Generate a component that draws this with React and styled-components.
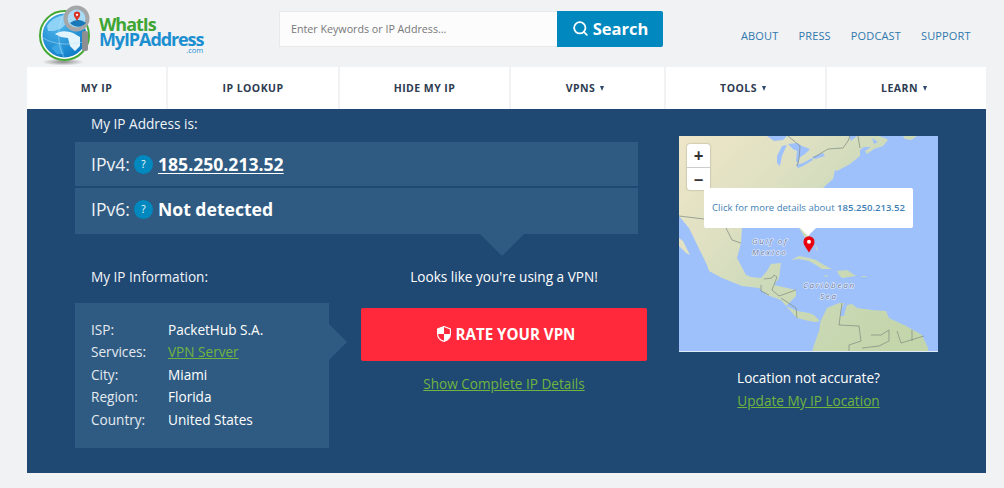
import React from 'react'
import styled, { createGlobalStyle } from 'styled-components'
import { Search } from 'lucide-react'

const GlobalStyle = createGlobalStyle`
    html, body {
        margin: 0;
        background-color: #f1f2f4;
        font-family: "Open Sans", "Liberation Sans", sans-serif;
    }
    * { box-sizing: border-box; }
`

const Page = styled.div`
    width: 959px;
    margin-left: 27px;
    padding-bottom: 15px;
`

const Header = styled.div`
    height: 67px;
    display: flex;
    align-items: flex-start;
`

const Logo = styled.a`
    display: flex;
    width: 242px;
    margin-left: 10px;
    margin-top: 4px;
`

const LogoText = styled.div`
    margin-left: 6px;
    margin-top: 13px;
    display: flex;
    flex-direction: column;
    font-weight: 700;
`

const LogoGreen = styled.span`
    color: #3fa535;
    font-size: 18px;
    line-height: 15px;
    letter-spacing: -1.05px;
`

const LogoBlue = styled.span`
    color: #1b8fd0;
    font-size: 18px;
    line-height: 14px;
    letter-spacing: -1.1px;
`

const LogoCom = styled.span`
    color: #1b8fd0;
    font-size: 7.5px;
    line-height: 8px;
    font-weight: 400;
    text-align: right;
`

const SearchBox = styled.div`
    display: flex;
    margin-top: 11px;
    height: 36px;
`

const SearchInput = styled.div`
    width: 278px;
    background-color: #fcfcfc;
    border: 1px solid #e8e9eb;
    border-right: none;
    padding-left: 11px;
    font-size: 10.7px;
    line-height: 34px;
    color: #77787a;
`

const SearchButton = styled.button`
    width: 106px;
    border: none;
    border-radius: 0 2px 2px 0;
    background-color: #0088bf;
    color: #fff;
    font-family: inherit;
    font-size: 16.5px;
    font-weight: 700;
    line-height: 36px;
    display: flex;
    align-items: flex-start;
    justify-content: center;
    gap: 4px;
    padding: 0;
    svg {
        margin-top: 9px;
    }
`

const TopLinks = styled.div`
    display: flex;
    gap: 20px;
    margin-left: 78px;
    margin-top: 29px;
`

const TopLink = styled.a`
    font-size: 11px;
    line-height: 14px;
    letter-spacing: 0.15px;
    color: #2f78ad;
`

const Nav = styled.div`
    height: 42px;
    display: flex;
    gap: 2px;
    background-color: #f1f2f4;
`

const NavItem = styled.a`
    width: ${props => props.$width}px;
    padding-right: ${props => props.$caret ? 5 : 0}px;
    background-color: #fff;
    display: flex;
    align-items: center;
    justify-content: center;
    gap: 5px;
    font-size: 10.5px;
    font-weight: 700;
    letter-spacing: 0.45px;
    color: #2e3b50;
`

const Caret = styled.span`
    width: 0;
    height: 0;
    border-left: 2.5px solid transparent;
    border-right: 2.5px solid transparent;
    border-top: 5px solid #2e4a6b;
`

const Main = styled.div`
    height: 364px;
    background-color: #1f4873;
    display: flex;
    color: #fff;
    padding-left: 48px;
    font-size: 13.6px;
`

const LeftColumn = styled.div`
    width: 572px;
`

const Heading = styled.div`
    padding-left: 16px;
    line-height: 19px;
    color: #f2f5f8;
`

const TopHeading = styled(Heading)`
    height: 33px;
    padding-top: 5px;
`

const IpRow = styled.div`
    position: relative;
    width: 563px;
    height: ${props => props.$height}px;
    margin-bottom: 2px;
    padding: 0 0 ${props => props.$lift}px 16px;
    background-color: #2f5b82;
    display: flex;
    align-items: center;
    font-size: 17.6px;
    color: #eef2f6;
    ${props => props.$pointer && `
        &::after {
            content: "";
            position: absolute;
            left: 405px;
            top: 100%;
            border-left: 22px solid transparent;
            border-right: 22px solid transparent;
            border-top: 22px solid #2f5b82;
        }
    `}
`

const HelpBadge = styled.span`
    width: 19px;
    height: 19px;
    border-radius: 50%;
    margin: 1px 5px 0 4px;
    background-color: #0088bf;
    color: #fff;
    font-size: 10px;
    font-weight: 400;
    line-height: 19px;
    text-align: center;
`

const IpValue = styled.a`
    font-weight: 700;
    color: #fff;
    text-decoration: ${props => props.$underline ? 'underline' : 'none'};
    text-underline-offset: 2px;
`

const LowerRow = styled.div`
    display: flex;
    gap: 32px;
    margin-top: 33px;
`

const InfoColumn = styled.div`
    width: 254px;
`

const InfoBox = styled.div`
    position: relative;
    height: 145px;
    margin-top: 17px;
    padding: 16px 0 0 16px;
    background-color: #2f5b82;
    display: grid;
    grid-template-columns: 77px 1fr;
    grid-auto-rows: 22.4px;
    align-content: start;
    line-height: 22px;
    &::after {
        content: "";
        position: absolute;
        left: 100%;
        top: 21px;
        border-top: 18px solid transparent;
        border-bottom: 18px solid transparent;
        border-left: 18px solid #2f5b82;
    }
`

const InfoLabel = styled.span`
    color: #e4eaf0;
`

const InfoValue = styled.span`
    color: #fff;
`

const GreenLink = styled.a`
    color: #6fb53f;
    text-decoration: underline;
    text-underline-offset: 1px;
`

const VpnColumn = styled.div`
    width: 286px;
    display: flex;
    flex-direction: column;
    align-items: center;
`

const VpnNote = styled.div`
    line-height: 19px;
    color: #fff;
`

const RateButton = styled.button`
    width: 100%;
    height: 53px;
    margin-top: 22px;
    padding: 0 0 1px 4px;
    border: none;
    border-radius: 2px;
    background-color: #ff293b;
    color: #fff;
    font-family: inherit;
    font-size: 15.1px;
    font-weight: 700;
    display: flex;
    align-items: center;
    justify-content: center;
    gap: 5px;
`

const DetailsLink = styled(GreenLink)`
    margin-top: 13px;
    line-height: 19px;
`

const MapColumn = styled.div`
    width: 259px;
    margin-left: 32px;
    padding-top: 27px;
    display: flex;
    flex-direction: column;
    align-items: center;
`

const MapBox = styled.div`
    position: relative;
    width: 259px;
    height: 216px;
    margin-bottom: 16px;
    overflow: hidden;
`

const MapImage = styled.svg`
    display: block;
`

const ZoomControl = styled.div`
    position: absolute;
    left: 8px;
    top: 8px;
    width: 23px;
    border-radius: 3px;
    box-shadow: 0 0 2px rgba(0, 0, 0, 0.35);
    background-color: #fff;
`

const ZoomButton = styled.div`
    height: 23px;
    display: flex;
    align-items: center;
    justify-content: center;
    color: #333;
    font-size: 17px;
    font-weight: 700;
    line-height: 1;
    & + & {
        border-top: 1px solid #ccc;
    }
`

const Popup = styled.div`
    position: absolute;
    left: 25px;
    top: 52px;
    width: 209px;
    height: 40px;
    background-color: #fff;
    border-radius: 2px;
    font-size: 9.55px;
    line-height: 39px;
    text-align: center;
    color: #3f7fb5;
    white-space: nowrap;
    &::after {
        content: "";
        position: absolute;
        left: 96px;
        top: 100%;
        border-left: 8px solid transparent;
        border-right: 8px solid transparent;
        border-top: 8px solid #fff;
    }
`

const PopupIp = styled.b`
    font-weight: 600;
`

const Pin = styled.svg`
    position: absolute;
    left: 124px;
    top: 100px;
`

const LocationNote = styled.div`
    line-height: 19px;
    color: #fff;
`

const LocationLink = styled(GreenLink)`
    margin-top: 4px;
    line-height: 19px;
`

const navItems = [
    { label: 'MY IP', width: 139 },
    { label: 'IP LOOKUP', width: 170 },
    { label: 'HIDE MY IP', width: 169 },
    { label: 'VPNS', width: 153, caret: true },
    { label: 'TOOLS', width: 159, caret: true },
    { label: 'LEARN', width: 159, caret: true },
]

const infoRows = [
    ['ISP:', 'PacketHub S.A.'],
    ['Services:', 'VPN Server', true],
    ['City:', 'Miami'],
    ['Region:', 'Florida'],
    ['Country:', 'United States'],
]

const LogoMark = () => (
    <svg width="56" height="62" viewBox="0 0 56 62">
        <defs>
            <radialGradient id="globe" cx="0.35" cy="0.3" r="0.8">
                <stop offset="0" stopColor="#4fb6ec" />
                <stop offset="1" stopColor="#0b78c4" />
            </radialGradient>
            <radialGradient id="shade" cx="0.5" cy="0.5" r="0.5">
                <stop offset="0" stopColor="#444" stopOpacity="0.6" />
                <stop offset="1" stopColor="#444" stopOpacity="0" />
            </radialGradient>
        </defs>
        <ellipse cx="26" cy="58" rx="21" ry="3.5" fill="url(#shade)" />
        <circle cx="27.5" cy="31.5" r="24.5" fill="#fff" stroke="#46a935" strokeWidth="2" />
        <circle cx="27.5" cy="31.5" r="22" fill="url(#globe)" />
        <path d="M10 22 C14 15 22 11 29 11 L31 18 L25 24 L17 27 L11 27 Z" fill="#8ed2f5" />
        <path d="M18 30 C24 26 30 27 36 29 L43 33 L43 42 L38 47 L33 42 L31 34 L24 33 Z" fill="#e4f4fc" />
        <path d="M14 44 L24 38 L27 50 L20 50 Z" fill="#3ba5e4" />
        <path d="M6 34 C16 40 30 42 46 38 M27 10 C20 22 20 42 27 53" fill="none" stroke="#bfe5f8" strokeWidth="0.5" />
        <rect x="45" y="27" width="6" height="20" rx="2" fill="#8d8f91" />
        <circle cx="39.5" cy="14.5" r="11" fill="#a8dcf6" stroke="#a5a6a8" strokeWidth="4" />
        <path d="M33 19 C38 15 44 15 49 19 C44 24 38 24 33 19 Z" fill="#1878b8" />
        <path d="M40 17 C38 13.5 36.8 12.5 36.8 10.8 A3.2 3.2 0 0 1 43.2 10.8 C43.2 12.5 42 13.5 40 17 Z" fill="#d8352a" />
        <circle cx="40" cy="10.8" r="1.1" fill="#fff" />
    </svg>
)

const ShieldIcon = () => (
    <svg width="14" height="16" viewBox="0 0 14 16">
        <path d="M7 .6 L13.4 3 V8 C13.4 12 10 14.5 7 15.4 C4 14.5 .6 12 .6 8 V3 Z" fill="none" stroke="#fff" strokeWidth="1.1" />
        <path d="M7 .6 L.6 3 V8 H7 Z" fill="#fff" />
        <path d="M7 8 H13.4 C13.4 12 10 14.5 7 15.4 Z" fill="#fff" />
    </svg>
)

const MapDrawing = () => (
    <MapImage width="259" height="216" viewBox="0 0 259 216">
        <defs>
            <linearGradient id="land" gradientUnits="userSpaceOnUse" x1="0" y1="0" x2="230" y2="210">
                <stop offset="0" stopColor="#efe6c8" />
                <stop offset="0.3" stopColor="#dfe0c2" />
                <stop offset="0.5" stopColor="#cedbbb" />
                <stop offset="1" stopColor="#c3d5aa" />
            </linearGradient>
            <filter id="soft">
                <feGaussianBlur stdDeviation="0.35" />
            </filter>
        </defs>
        <rect width="259" height="216" fill="#9fc1fb" />
        <g fill="url(#land)" filter="url(#soft)">
            <path d="M0 0 L200 0 L206 2 L209 4 L204 10 L195 13 L188 18 L186 15 L192 11 L185 11 L181 14 L181 20 L171 28 L158 35 L156 34 L154 43 L146 50 L135 62 L128 92 L63 92 L62 107 L58 122 L67 139 L72 141 L82 142 L88 135 L92 128 L102 127 L100 142 L95 149 L117 154 L117 160 L107 170 L118 175 L130 177 L135 179 L141 185 L136 186 L130 185 L118 182 L107 170 L102 164 L88 159 L80 152 L63 150 L43 142 L30 135 L28 129 L10 92 L0 80 Z" />
            <path d="M0 102 L4 105 L11 119 L7 117 L0 110 Z" />
            <path d="M120 92 L125 100 L129 105 L131 102 L128 92 Z" />
            <path d="M141.7 185 L148 172 L160 167 L165 167 L162 175 L165 179 L168 169 L173 168 L178 172 L193 174 L207 175 L210 182 L227 190 L243 199 L249 212 L249 216 L133 216 L135 209 L140 195 Z" />
            <path d="M112 124 L120 120 L130 122 L137 124 L145 129 L153 133 L143 133 L137 129 L130 125 L120 123 Z" />
            <path d="M158 135 L168 134 L177 140 L170 141 L163 142 L160 139 Z" />
            <path d="M144 139 L150 140 L147 141 Z M183 140 L187 140 L187 141 L183 141 Z M136 108 L138 112 L139 116 L137 113 Z" />
            <path d="M224 0 L238 0 L232 4 L226 3 Z" />
        </g>
        <g fill="#9fc1fb" filter="url(#soft)">
            <path d="M103 10 L108 9 L106 13 L103 20 L101 30 L98 27 L98 20 Z" />
            <path d="M109 8 L118 7 L123 10 L131 13 L126 18 L120 22 L120 28 L117 25 L118 15 L114 13 Z" />
            <path d="M117 29 L124 27 L133 22 L134 24 L124 30 L119 32 Z" />
            <path d="M133 21 L144 17 L146 20 L136 23 Z" />
            <path d="M88 0 L108 0 L104 4 L95 5 Z" />
            <path d="M170 0 L178 0 L172 5 Z" />
            <path d="M193 2 L199 6 L195 8 Z" />
            <path d="M161 180 L163 171 L166 172 L165 180 Z" />
        </g>
        <g fill="none" stroke="#7d8a80" strokeWidth="0.7">
            <path d="M109 0 L121 10 L120 23 L118 30 M134 22 L149 13 L164 12 L169 5 L171 0 M179 0 L181 12" />
            <path d="M0 80 L25 83 M47 92 L53 104 L62 107" />
            <path d="M82 149 L82 155 L90 159 M85 143 L93 142 L95 139 L98 141 L93 154 L100 160 L117 154 M102 162 L117 172 L118 182" />
            <path d="M163 167 L160 189 L180 190 L182 205 L170 209 L170 215" />
            <path d="M192 199 L202 199 L210 194 L210 205 L200 210 L183 212" />
            <path d="M218 195 L222 207 L245 200 M233 194 L233 205" />
        </g>
        <g fontFamily="Open Sans, sans-serif" fontStyle="italic" fontSize="8" letterSpacing="1.8" fill="#5f7299" stroke="#fff" strokeWidth="1.2" strokeOpacity="0.8" paintOrder="stroke">
            <text x="73" y="108">Gulf of</text>
            <text x="73" y="118.5">Mexico</text>
            <text x="124" y="152">Caribbean</text>
            <text x="141" y="163">Sea</text>
        </g>
        <rect y="215" width="259" height="1" fill="#dfe8f5" />
    </MapImage>
)

const App = () => {
    return <Page>
        <GlobalStyle />
        <Header>
            <Logo>
                <LogoMark />
                <LogoText>
                    <LogoGreen>WhatIs</LogoGreen>
                    <LogoBlue>MyIPAddress</LogoBlue>
                    <LogoCom>.com</LogoCom>
                </LogoText>
            </Logo>
            <SearchBox>
                <SearchInput>Enter Keywords or IP Address...</SearchInput>
                <SearchButton><Search size={17} strokeWidth={2.5} />Search</SearchButton>
            </SearchBox>
            <TopLinks>
                {['ABOUT', 'PRESS', 'PODCAST', 'SUPPORT'].map(link => <TopLink key={link}>{link}</TopLink>)}
            </TopLinks>
        </Header>
        <Nav>
            {navItems.map(item => (
                <NavItem key={item.label} $width={item.width} $caret={item.caret}>
                    {item.label}
                    {item.caret && <Caret />}
                </NavItem>
            ))}
        </Nav>
        <Main>
            <LeftColumn>
                <TopHeading>My IP Address is:</TopHeading>
                <IpRow $height={44} $lift={1}>
                    IPv4:<HelpBadge>?</HelpBadge><IpValue $underline>185.250.213.52</IpValue>
                </IpRow>
                <IpRow $height={46} $lift={4} $pointer>
                    IPv6:<HelpBadge>?</HelpBadge><IpValue>Not detected</IpValue>
                </IpRow>
                <LowerRow>
                    <InfoColumn>
                        <Heading>My IP Information:</Heading>
                        <InfoBox>
                            {infoRows.map(([label, value, isLink]) => (
                                <React.Fragment key={label}>
                                    <InfoLabel>{label}</InfoLabel>
                                    {isLink ? <GreenLink>{value}</GreenLink> : <InfoValue>{value}</InfoValue>}
                                </React.Fragment>
                            ))}
                        </InfoBox>
                    </InfoColumn>
                    <VpnColumn>
                        <VpnNote>Looks like you're using a VPN!</VpnNote>
                        <RateButton><ShieldIcon />RATE YOUR VPN</RateButton>
                        <DetailsLink>Show Complete IP Details</DetailsLink>
                    </VpnColumn>
                </LowerRow>
            </LeftColumn>
            <MapColumn>
                <MapBox>
                    <MapDrawing />
                    <ZoomControl>
                        <ZoomButton>+</ZoomButton>
                        <ZoomButton>−</ZoomButton>
                    </ZoomControl>
                    <Popup>Click for more details about <PopupIp>185.250.213.52</PopupIp></Popup>
                    <Pin width="12" height="17" viewBox="0 0 12 17">
                        <path d="M6 16.5 C3 11.5 .5 9 .5 5.7 A5.5 5.5 0 0 1 11.5 5.7 C11.5 9 9 11.5 6 16.5 Z" fill="#e8000f" />
                        <circle cx="6" cy="5.7" r="2" fill="#fff" />
                    </Pin>
                </MapBox>
                <LocationNote>Location not accurate?</LocationNote>
                <LocationLink>Update My IP Location</LocationLink>
            </MapColumn>
        </Main>
    </Page>
}

export default App
